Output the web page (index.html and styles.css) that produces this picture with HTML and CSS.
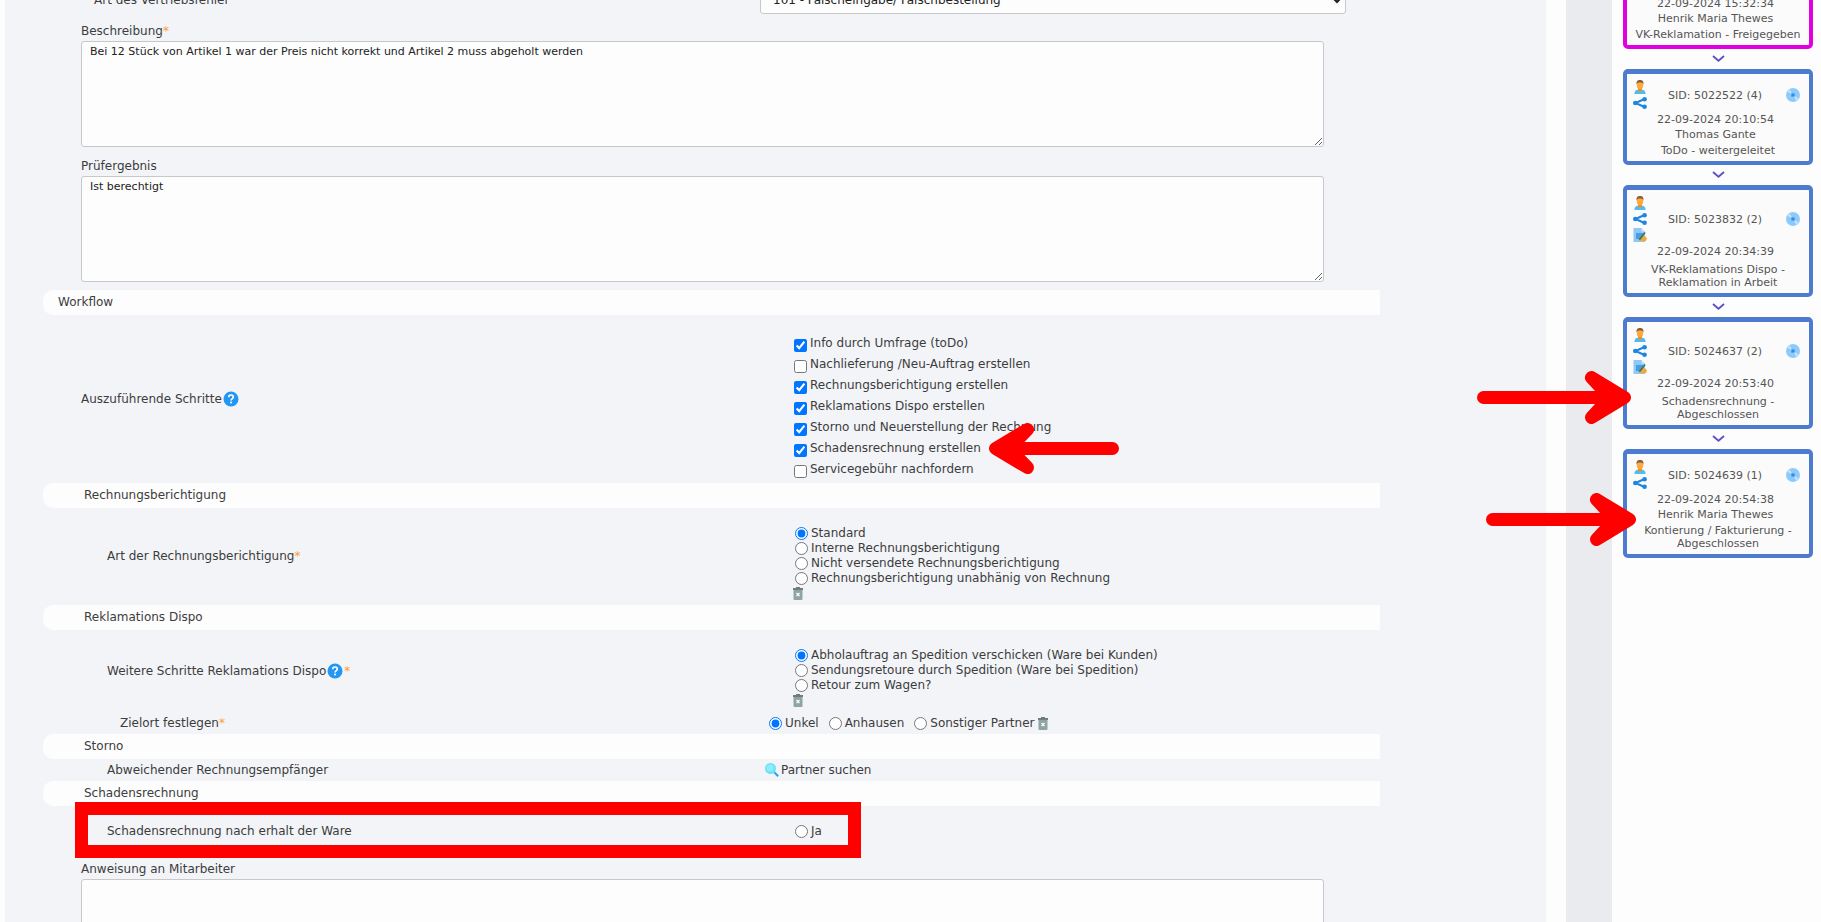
FILE: index.html
```
<!DOCTYPE html>
<html lang="de">
<head>
<meta charset="UTF-8" />
<meta name="viewport" content="width=device-width, initial-scale=1" />
<title>VK-Reklamation</title>
<link rel="stylesheet" href="styles.css">
</head>
<body>

<!-- shared icons -->
<svg class="sprite" aria-hidden="true">
  <symbol id="icon-person" viewBox="0 0 14 14">
    <path d="M1.500 14v-1c0-2 1.500-3 3.500-3.300h4c2 .3 3.500 1.300 3.500 3.300v1z" fill="#4fbdf0"/>
    <path d="M5 8h4v2.500L7 12l-2-1.500z" fill="#ef8f1d"/>
    <ellipse cx="7" cy="5" rx="3.200" ry="4.300" fill="#ffa83d"/>
    <path d="M3.500 4.500C3 1.300 4.800 0 7 0s4 1.300 3.500 4.500C10 3 9.500 2.500 7 2.500S4 3 3.500 4.500z" fill="#8a5a33"/>
  </symbol>
  <symbol id="icon-share" viewBox="0 0 14 12">
    <path d="M11.500 2 2.500 6l9 4" fill="none" stroke="#1f86e0" stroke-width="2.200"/>
    <circle cx="2.300" cy="6" r="2.300" fill="#1f86e0"/>
    <circle cx="11.600" cy="2.300" r="2.300" fill="#1f86e0"/>
    <circle cx="11.600" cy="9.700" r="2.300" fill="#1f86e0"/>
  </symbol>
  <symbol id="icon-edit" viewBox="0 0 14 14">
    <path d="M.5 0h8L12 3.500V14H.5z" fill="#8fc8f7"/>
    <path d="M8.500 0 12 3.500H8.500z" fill="#d4ebfc"/>
    <path d="M3 5h7v6H3z" fill="#4a9be8"/>
    <path d="M8 9.500 12 8l2 2.500-1 2.500-6 .3-1.500-1z" fill="#f5a63a"/>
    <path d="M5.500 11.500 11.500 4l1.200 1-5.500 7z" fill="#3d7a3c"/>
  </symbol>
  <symbol id="icon-disc" viewBox="0 0 14 14">
    <circle cx="7" cy="7" r="7" fill="#8ecbfb"/>
    <path d="M7 7 1.500 3.500 3.500 1.500zM7 7l5.500 3.500-2 2z" fill="#c8e6fd"/>
    <circle cx="7" cy="7" r="2.300" fill="#5aa9ec"/>
    <circle cx="7" cy="7" r="1" fill="#2f7fd0"/>
  </symbol>
  <symbol id="icon-trash" viewBox="0 0 10 13">
    <path d="M.5 2h9v10q0 1-1 1h-7q-1 0-1-1z" fill="#90a4a4"/>
    <path d="M0 1h3V0h4v1h3v2H0z" fill="#6f7d7f"/>
    <path d="m3.500 6 3 3.200m0-3.200-3 3.200" stroke="#fff" stroke-width="1.200"/>
  </symbol>
  <symbol id="icon-help" viewBox="0 0 16 16">
    <circle cx="8" cy="8" r="7.500" fill="#2196f3"/>
    <path d="M5.700 6.200C5.700 4.800 6.700 4 8 4s2.300.8 2.300 2c0 1.600-2.200 1.700-2.200 3.500" fill="none" stroke="#fff" stroke-width="1.700"/>
    <circle cx="8.100" cy="11.500" r="1.100" fill="#fff"/>
  </symbol>
  <symbol id="icon-search" viewBox="0 0 14 14">
    <path d="m9 9 4.200 4.200" stroke="#2f9fe6" stroke-width="2"/>
    <circle cx="5.500" cy="5.500" r="5.500" fill="#6fe0f8"/>
    <circle cx="5" cy="5" r="3.500" fill="#8ceefc"/>
  </symbol>
  <symbol id="icon-chevron" viewBox="0 0 13 7">
    <path d="m1 1 5.500 4.800L12 1" fill="none" stroke="#5b4fc4" stroke-width="1.800"/>
  </symbol>
</svg>

<main class="panel">
<form class="form">

  <div class="row row-select">
    <label class="row-label indent-3" for="fehler">Art des Vertriebsfehler</label>
    <div><select id="fehler"><option>101 - Falscheingabe/ Falschbestellung</option></select></div>
  </div>

  <div class="text-block">
    <label for="beschreibung">Beschreibung<span class="required">*</span></label>
    <textarea id="beschreibung">Bei 12 Stück von Artikel 1 war der Preis nicht korrekt und Artikel 2 muss abgeholt werden</textarea>
  </div>
  <div class="text-block">
    <label for="pruefergebnis">Prüfergebnis</label>
    <textarea id="pruefergebnis">Ist berechtigt</textarea>
  </div>

  <h2 class="bar bar-main">Workflow</h2>
  <div class="row">
    <div class="row-label indent-1">Auszuführende Schritte<svg class="help"><use href="#icon-help"/></svg></div>
    <ul class="checks">
      <li><label><input type="checkbox" checked>Info durch Umfrage (toDo)</label></li>
      <li><label><input type="checkbox">Nachlieferung /Neu-Auftrag erstellen</label></li>
      <li><label><input type="checkbox" checked>Rechnungsberichtigung erstellen</label></li>
      <li><label><input type="checkbox" checked>Reklamations Dispo erstellen</label></li>
      <li><label><input type="checkbox" checked>Storno und Neuerstellung der Rechnung</label></li>
      <li>
        <label><input type="checkbox" checked>Schadensrechnung erstellen</label>
        <svg class="arrow arrow-step" viewBox="0 0 130 51">
          <path d="M123.500 25.500H30"/>
          <path class="head" d="M6.500 25.500 38.500 6.500 20 25.500 38.500 44.500z"/>
        </svg>
      </li>
      <li><label><input type="checkbox">Servicegebühr nachfordern</label></li>
    </ul>
  </div>

  <h2 class="bar">Rechnungsberichtigung</h2>
  <div class="row">
    <div class="row-label indent-2">Art der Rechnungsberichtigung<span class="required">*</span></div>
    <div class="radios">
      <label><input type="radio" name="art" checked>Standard</label>
      <label><input type="radio" name="art">Interne Rechnungsberichtigung</label>
      <label><input type="radio" name="art">Nicht versendete Rechnungsberichtigung</label>
      <label><input type="radio" name="art">Rechnungsberichtigung unabhänig von Rechnung</label>
      <button type="button" class="clear" aria-label="Auswahl löschen"><svg><use href="#icon-trash"/></svg></button>
    </div>
  </div>

  <h2 class="bar">Reklamations Dispo</h2>
  <div class="row">
    <div class="row-label indent-2">Weitere Schritte Reklamations Dispo<svg class="help"><use href="#icon-help"/></svg><span class="required">*</span></div>
    <div class="radios">
      <label><input type="radio" name="dispo" checked>Abholauftrag an Spedition verschicken (Ware bei Kunden)</label>
      <label><input type="radio" name="dispo">Sendungsretoure durch Spedition (Ware bei Spedition)</label>
      <label><input type="radio" name="dispo">Retour zum Wagen?</label>
      <button type="button" class="clear" aria-label="Auswahl löschen"><svg><use href="#icon-trash"/></svg></button>
    </div>
  </div>
  <div class="row row-line">
    <div class="row-label indent-4">Zielort festlegen<span class="required">*</span></div>
    <div class="radios-inline">
      <label><input type="radio" name="ziel" checked>Unkel</label>
      <label><input type="radio" name="ziel">Anhausen</label>
      <label><input type="radio" name="ziel">Sonstiger Partner</label>
      <button type="button" class="clear" aria-label="Auswahl löschen"><svg><use href="#icon-trash"/></svg></button>
    </div>
  </div>

  <h2 class="bar">Storno</h2>
  <div class="row row-line">
    <div class="row-label indent-2">Abweichender Rechnungsempfänger</div>
    <button type="button" class="partner"><svg><use href="#icon-search"/></svg>Partner suchen</button>
  </div>

  <h2 class="bar">Schadensrechnung</h2>
  <div class="row row-marked">
    <div class="row-label indent-2">Schadensrechnung nach erhalt der Ware</div>
    <div class="radios">
      <label><input type="radio" name="ware">Ja</label>
    </div>
    <div class="marker"></div>
  </div>

  <div class="text-block text-block-last">
    <label for="anweisung">Anweisung an Mitarbeiter</label>
    <textarea id="anweisung"></textarea>
  </div>
</form>
</main>

<div class="divider"></div>

<aside class="history">
  <div class="card card-current">
    <div class="card-head">
      <div class="card-icons"><svg class="person"><use href="#icon-person"/></svg></div>
      <svg class="disc"><use href="#icon-disc"/></svg>
    </div>
    <p>22-09-2024 15:32:34</p>
    <p>Henrik Maria Thewes</p>
    <p class="status">VK-Reklamation - Freigegeben</p>
  </div>
  <svg class="chevron"><use href="#icon-chevron"/></svg>

  <div class="card">
    <div class="card-head">
      <div class="card-icons">
        <svg class="person"><use href="#icon-person"/></svg>
        <svg class="share"><use href="#icon-share"/></svg>
      </div>
      <span>SID: 5022522 (4)</span>
      <svg class="disc"><use href="#icon-disc"/></svg>
    </div>
    <p>22-09-2024 20:10:54</p>
    <p>Thomas Gante</p>
    <p class="status">ToDo - weitergeleitet</p>
  </div>
  <svg class="chevron"><use href="#icon-chevron"/></svg>

  <div class="card">
    <div class="card-head">
      <div class="card-icons">
        <svg class="person"><use href="#icon-person"/></svg>
        <svg class="share"><use href="#icon-share"/></svg>
        <svg class="edit"><use href="#icon-edit"/></svg>
      </div>
      <span>SID: 5023832 (2)</span>
      <svg class="disc"><use href="#icon-disc"/></svg>
    </div>
    <p>22-09-2024 20:34:39</p>
    <p class="status status-only">VK-Reklamations Dispo -<br>Reklamation in Arbeit</p>
  </div>
  <svg class="chevron"><use href="#icon-chevron"/></svg>

  <div class="card">
    <div class="card-head">
      <div class="card-icons">
        <svg class="person"><use href="#icon-person"/></svg>
        <svg class="share"><use href="#icon-share"/></svg>
        <svg class="edit"><use href="#icon-edit"/></svg>
      </div>
      <span>SID: 5024637 (2)</span>
      <svg class="disc"><use href="#icon-disc"/></svg>
    </div>
    <p>22-09-2024 20:53:40</p>
    <p class="status status-only">Schadensrechnung -<br>Abgeschlossen</p>
    <svg class="arrow arrow-invoice" viewBox="0 0 154 53">
      <path d="M6.500 26.500H130"/>
      <path class="head" d="M147.500 26.500 114.500 6.500 133 26.500 114.500 46.500z"/>
    </svg>
  </div>
  <svg class="chevron"><use href="#icon-chevron"/></svg>

  <div class="card">
    <div class="card-head">
      <div class="card-icons">
        <svg class="person"><use href="#icon-person"/></svg>
        <svg class="share"><use href="#icon-share"/></svg>
      </div>
      <span>SID: 5024639 (1)</span>
      <svg class="disc"><use href="#icon-disc"/></svg>
    </div>
    <p>22-09-2024 20:54:38</p>
    <p>Henrik Maria Thewes</p>
    <p class="status">Kontierung / Fakturierung -<br>Abgeschlossen</p>
    <svg class="arrow arrow-booking" viewBox="0 0 150 53">
      <path d="M6.500 26.500H126"/>
      <path class="head" d="M143.500 26.500 110.500 6.500 129 26.500 110.500 46.500z"/>
    </svg>
  </div>
</aside>

</body>
</html>
```
FILE: styles.css
```
* {
  box-sizing: border-box;
}
body {
  display: flex;
  height: 100vh;
  margin: 0;
  padding-left: 5px;
  overflow: hidden;
  background: #fdfdfd;
  color: #3c3c3c;
  font-family: "DejaVu Sans", Verdana, sans-serif;
  font-size: 12px;
  line-height: 15px;
}
.sprite {
  position: absolute;
  width: 0;
  height: 0;
}
ul, p, h2 {
  margin: 0;
  padding: 0;
  list-style: none;
}
svg {
  display: block;
  flex: none;
}
button {
  display: flex;
  align-items: center;
  padding: 0;
  border: none;
  background: none;
  color: inherit;
  font: inherit;
  cursor: pointer;
}
input {
  width: 13px;
  height: 13px;
  margin: 0;
  flex: none;
}

/* form */
.panel {
  flex: 1;
  background: #f2f4f8;
}
.form {
  margin-top: -14px;
  padding: 0 166px 0 38px;
}
.row {
  display: grid;
  grid-template-columns: 717fr 620fr;
  align-items: center;
  position: relative;
}
.row-label {
  display: flex;
  align-items: center;
}
.indent-1 { padding-left: 38px; }
.indent-2 { padding-left: 64px; }
.indent-3 { padding-left: 51px; }
.indent-4 { padding-left: 77px; }
.row-line {
  height: 22px;
}
.required {
  color: #ff9d2e;
}
.help {
  width: 16px;
  height: 16px;
  margin: 0 1px;
}
select {
  display: block;
  width: 586px;
  max-width: 100%;
  height: 28px;
  padding: 0 8px;
  border: 1px solid #c8c8c8;
  border-radius: 3px;
  background: #fdfdfd;
  color: #222;
  font: inherit;
}
.text-block {
  padding: 10px 56px 0 38px;
}
.text-block-last {
  padding-top: 6px;
}
.text-block label {
  display: block;
}
textarea {
  display: block;
  width: 100%;
  height: 106px;
  margin: 2px 0;
  padding: 2px 8px;
  border: 1px solid #c8c8c8;
  border-radius: 3px;
  background: #fdfdfd;
  color: #222;
  font: inherit;
  font-size: 11px;
}
.bar {
  padding: 5px 41px;
  border-radius: 10px 0 0 10px;
  background: #fdfdfd;
  font-size: 12px;
  font-weight: normal;
}
.bar-main {
  margin-top: 8px;
  padding-left: 15px;
}
.checks {
  padding: 21px 0 0 34px;
}
.checks li {
  position: relative;
  height: 21px;
}
.checks label {
  display: flex;
  gap: 3px;
}
.checks input {
  margin-top: 3px;
}
.radios {
  padding: 18px 0 4px 35px;
}
.radios label {
  display: flex;
  align-items: center;
  gap: 3px;
}
.clear svg {
  width: 10px;
  height: 13px;
}
.radios .clear {
  height: 15px;
  margin-left: -2px;
}
.radios-inline {
  display: flex;
  align-items: center;
  padding-left: 9px;
}
.radios-inline label {
  display: flex;
  align-items: center;
  gap: 3px;
  margin-right: 10px;
}
.radios-inline label:last-of-type {
  margin-right: 4px;
}
.partner {
  padding-left: 5px;
  gap: 2px;
}
.partner svg {
  width: 14px;
  height: 14px;
}
.row-marked .radios {
  padding-bottom: 17px;
}
.marker {
  position: absolute;
  top: -4px;
  left: 32px;
  width: 786px;
  height: 56px;
  border: 13px solid #f00;
  pointer-events: none;
}

/* history */
.divider {
  width: 46px;
  margin-left: 20px;
  background: #eaebef;
}
.history {
  width: 209px;
  padding: 0 8px 0 11px;
  margin-top: -31px;
  color: #555;
  font-size: 11px;
  text-align: center;
}
.card {
  position: relative;
  padding: 5px 6px 4px;
  border: 4px solid #4d7bd0;
  border-top-width: 5px;
  border-radius: 5px;
  background: #fbfbfb;
}
.card-current {
  border-color: #e000e0;
}
.card-head {
  display: flex;
  align-items: center;
  justify-content: space-between;
  margin-bottom: 1px;
  padding-right: 3px;
}
.card-head span {
  padding-right: 3px;
}
.card-icons {
  display: flex;
  flex-direction: column;
}
.card-icons svg {
  width: 14px;
  height: 14px;
  margin: 1px 0;
}
.card-icons .share {
  height: 12px;
  margin: 2px 0;
}
.disc {
  width: 14px;
  height: 14px;
}
.card p {
  padding-right: 5px;
}
.card .status {
  padding: 2px 0 0;
  line-height: 13px;
  white-space: nowrap;
}
.card .status-only {
  padding-top: 4px;
}
.chevron {
  width: 13px;
  height: 7px;
  margin: 6px auto 7px;
}

/* red arrows */
.arrow {
  position: absolute;
  z-index: 1;
  fill: none;
  stroke: #f00;
  stroke-width: 13;
  stroke-linecap: round;
  stroke-linejoin: round;
  pointer-events: none;
}
.arrow .head {
  fill: #f00;
}
.arrow-step {
  top: -18px;
  left: 195px;
  width: 130px;
  height: 51px;
}
.arrow-invoice {
  top: 49px;
  left: -150px;
  width: 154px;
  height: 53px;
}
.arrow-booking {
  top: 39px;
  left: -141px;
  width: 150px;
  height: 53px;
}
```
